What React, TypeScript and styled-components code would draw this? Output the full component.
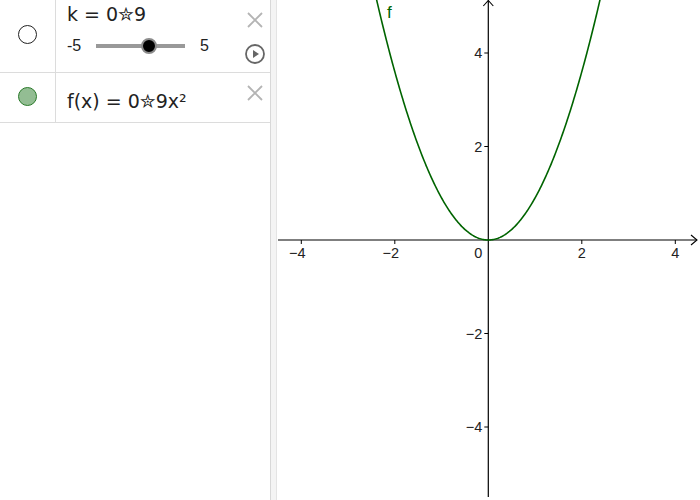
import React from "react";
import styled, { createGlobalStyle } from "styled-components";

const GlobalStyle = createGlobalStyle`
  html, body {
    margin: 0;
    padding: 0;
    background: #fff;
    font-family: "DejaVu Sans", "Liberation Sans", sans-serif;
    overflow: hidden;
  }
`;

const Page = styled.div`
  display: flex;
  width: 700px;
  height: 500px;
`;

const AlgebraPanel = styled.div`
  width: 270px;
  flex: none;
  display: flex;
  flex-direction: column;
`;

const Splitter = styled.div`
  width: 7px;
  flex: none;
  background: #f4f4f4;
  border-left: 1px solid #d8d8d8;
  border-right: 1px solid #e4e4e4;
  box-sizing: border-box;
`;

const Graphics = styled.div`
  flex: 1;
`;

const Row = styled.div<{ $h: number }>`
  display: flex;
  height: ${(p) => p.$h}px;
  border-bottom: 1px solid #dcdcdc;
`;

const Marble = styled.div`
  width: 56px;
  flex: none;
  border-right: 1px solid #dcdcdc;
  display: flex;
  justify-content: center;
  padding-top: 1px;
  box-sizing: border-box;
`;

const Dot = styled.span<{ $top: number; $fill: string; $stroke: string }>`
  margin-top: ${(p) => p.$top}px;
  width: 17px;
  height: 17px;
  border-radius: 50%;
  background: ${(p) => p.$fill};
  border: 1px solid ${(p) => p.$stroke};
`;

const Body = styled.div`
  flex: 1;
  padding-left: 11px;
  display: flex;
  flex-direction: column;
`;

const Formula = styled.div<{ $top: number }>`
  margin-top: ${(p) => p.$top}px;
  font-size: 19px;
  line-height: 22px;
  color: #222;
  white-space: nowrap;
`;

const SliderRow = styled.div`
  display: flex;
  align-items: center;
  margin-top: 12px;
  font-family: "Liberation Sans", Arial, sans-serif;
  font-size: 16px;
  color: #222;
`;

const Bound = styled.span`
  width: 29px;
`;

const Track = styled.div`
  position: relative;
  width: 89px;
  height: 4px;
  background: #999;
  margin-right: 15px;
`;

const Knob = styled.span`
  position: absolute;
  top: 50%;
  width: 12px;
  height: 12px;
  margin: -8px 0 0 -8px;
  border-radius: 50%;
  background: #000;
  border: 2px solid #8c8c8c;
`;

const Tools = styled.div<{ $top: number }>`
  width: 30px;
  flex: none;
  display: flex;
  flex-direction: column;
  align-items: center;
  padding-top: ${(p) => p.$top}px;
  gap: 14px;
`;

const IconButton = styled.span`
  display: block;
  line-height: 0;
`;

function CloseIcon() {
  return (
    <IconButton>
      <svg width="18" height="18" viewBox="0 0 18 18">
        <path d="M2 2 L16 16 M16 2 L2 16" stroke="#b4b4b4" strokeWidth="1.8" />
      </svg>
    </IconButton>
  );
}

function PlayIcon() {
  return (
    <IconButton>
      <svg width="22" height="22" viewBox="0 0 22 22">
        <circle cx="11" cy="11" r="9" fill="none" stroke="#666" strokeWidth="1.8" />
        <path d="M9 7 L15 11 L9 15 Z" fill="#666" />
      </svg>
    </IconButton>
  );
}

const OX = 211.3;
const OY = 240;
const U = 46.75;

function Plot() {
  const pts: string[] = [];
  for (let x = -2.45; x <= 2.45; x += 0.02) {
    pts.push(`${(OX + x * U).toFixed(2)},${(OY - 0.9 * x * x * U).toFixed(2)}`);
  }
  const xt = [-4, -2, 2, 4];
  const yt = [4, 2, -2, -4];
  const lbl = { fontFamily: "'Liberation Sans', Arial, sans-serif", fontSize: 14.5, fill: "#222" };
  return (
    <svg width="423" height="500" viewBox="0 0 423 500" style={{ display: "block" }}>
      <line x1="1" y1={OY} x2="420" y2={OY} stroke="#000" strokeWidth="1.2" />
      <path d={`M414 ${OY - 5} L420 ${OY} L414 ${OY + 5}`} fill="none" stroke="#000" strokeWidth="1.1" />
      <line x1={OX} y1="0.5" x2={OX} y2="497" stroke="#000" strokeWidth="1.2" />
      <path d={`M${OX - 5} 6 L${OX} 0.5 L${OX + 5} 6`} fill="none" stroke="#000" strokeWidth="1.1" />
      {xt.map((v) => (
        <g key={"x" + v}>
          <line x1={OX + v * U} y1={OY} x2={OX + v * U} y2={OY + 4} stroke="#000" />
          <text x={OX + v * U - (v < 0 ? 4 : 0)} y={OY + 18} textAnchor="middle" {...lbl}>
            {v < 0 ? "\u2212" + Math.abs(v) : v}
          </text>
        </g>
      ))}
      <text x={OX - 6} y={OY + 18} textAnchor="end" {...lbl}>0</text>
      {yt.map((v) => (
        <g key={"y" + v}>
          <line x1={OX - 4} y1={OY - v * U} x2={OX} y2={OY - v * U} stroke="#000" />
          <text x={OX - 6} y={OY - v * U + 5} textAnchor="end" {...lbl}>
            {v < 0 ? "\u2212" + Math.abs(v) : v}
          </text>
        </g>
      ))}
      <polyline points={pts.join(" ")} fill="none" stroke="#006400" strokeWidth="1.6" />
      <text x="110" y="18" fontFamily="'Liberation Sans', Arial, sans-serif" fontSize="17" fill="#006400">f</text>
    </svg>
  );
}

export default function App() {
  return (
    <Page>
      <GlobalStyle />
      <AlgebraPanel>
        <Row $h={72}>
          <Marble>
            <Dot $top={24} $fill="#fff" $stroke="#222" />
          </Marble>
          <Body>
            <Formula $top={3}>k = 0✮9</Formula>
            <SliderRow>
              <Bound>-5</Bound>
              <Track>
                <Knob style={{ left: "59%" }} />
              </Track>
              <span>5</span>
            </SliderRow>
          </Body>
          <Tools $top={11}>
            <CloseIcon />
            <PlayIcon />
          </Tools>
        </Row>
        <Row $h={49}>
          <Marble>
            <Dot $top={13} $fill="#93bd93" $stroke="#2a7a2a" />
          </Marble>
          <Body>
            <Formula $top={17}>f(x) = 0✮9x²</Formula>
          </Body>
          <Tools $top={11}>
            <CloseIcon />
          </Tools>
        </Row>
      </AlgebraPanel>
      <Splitter />
      <Graphics>
        <Plot />
      </Graphics>
    </Page>
  );
}
